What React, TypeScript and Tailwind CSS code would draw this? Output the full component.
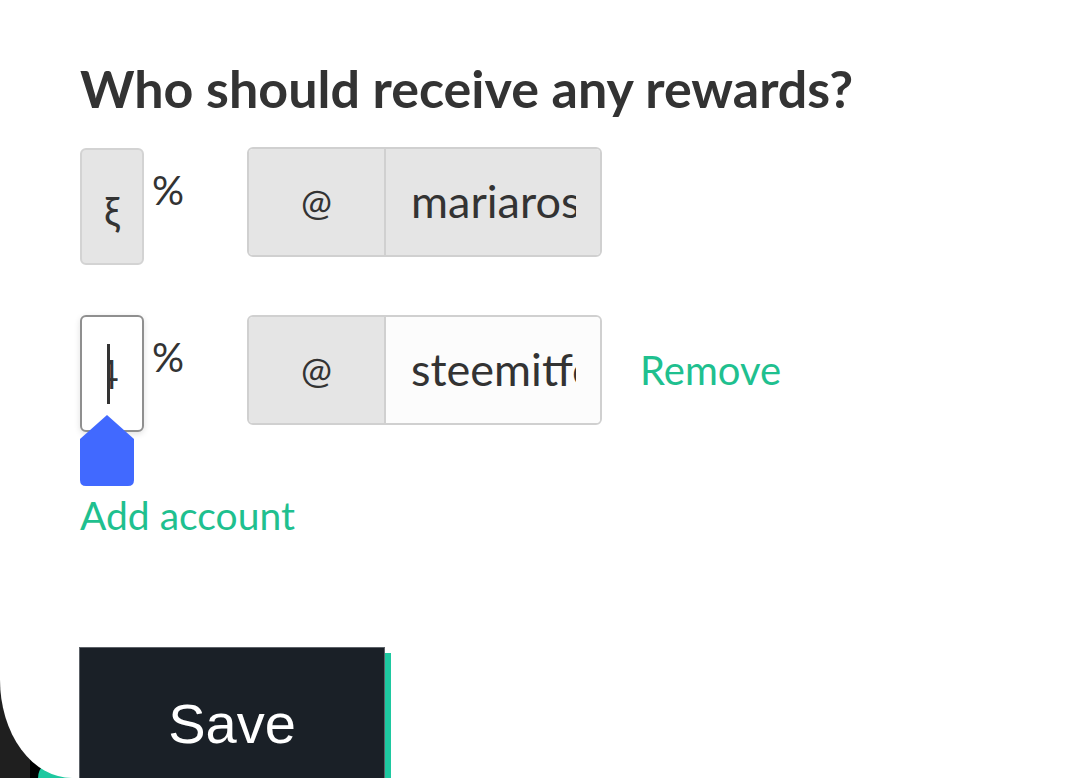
import React from 'react';

const green = 'text-[#1fc08f]';

function PercentBox({ focused, children }: { focused?: boolean; children: React.ReactNode }) {
  return (
    <div className="flex items-start">
      <div
        className={
          focused
            ? 'relative flex h-[117px] w-[64px] items-center justify-center overflow-hidden rounded-[6px] border-2 border-[#8f8f8f] bg-white shadow-[0_2px_6px_rgba(0,0,0,0.12)]'
            : 'relative flex h-[117px] w-[64px] items-center justify-center overflow-hidden rounded-[6px] border-2 border-[#d3d3d3] bg-[#e5e5e5]'
        }
      >
        {children}
      </div>
      <span className="ml-[8px] mt-[22px] text-[40px] leading-none text-[#333]">%</span>
    </div>
  );
}

function AccountInput({ value, disabled }: { value: string; disabled?: boolean }) {
  return (
    <div className="flex h-[110px] w-[355px] overflow-hidden rounded-[6px] border-2 border-[#d0d0d0]">
      <div className="flex w-[135px] items-center justify-center bg-[#e5e5e5] text-[37px] text-[#333]">@</div>
      <div
        className={
          disabled
            ? 'flex min-w-0 flex-1 items-center border-l-2 border-[#d0d0d0] bg-[#e5e5e5] pl-[25px] pr-[24px] text-[45px] text-[#333]'
            : 'flex min-w-0 flex-1 items-center border-l-2 border-[#d0d0d0] bg-[#fcfcfc] pl-[25px] pr-[24px] text-[45px] text-[#333]'
        }
      >
        <span className="block min-w-0 overflow-hidden whitespace-nowrap">{value}</span>
      </div>
    </div>
  );
}

export default function App() {
  return (
    <div className="relative h-[778px] w-[1079px] overflow-hidden bg-[#1f1f1f]" style={{ fontFamily: 'Lato, "Noto Sans", sans-serif' }}>
      {/* phone screen corner behind the sheet */}
      <div className="absolute bottom-0 left-[30px] h-[40px] w-[50px] bg-black" />
      <div className="absolute bottom-0 left-[38px] h-[18px] w-[60px] rounded-tl-[30px] bg-[#1ec8a0]" />

      <div className="relative h-full w-full rounded-bl-[72px_98px] bg-white pl-[80px] pt-[62px]">
        <h2 className="text-[52px] font-bold leading-none text-[#333]">Who should receive any rewards?</h2>

        <div className="mt-[34px] flex items-start">
          <PercentBox>
            <span className="mt-[8px] text-[40px] leading-none text-[#333]">ξ</span>
          </PercentBox>
          <div className="ml-[63px] -mt-px">
            <AccountInput value="mariaros" disabled />
          </div>
        </div>

        <div className="relative mt-[50px] flex items-start">
          <PercentBox focused>
            <div className="flex items-center">
              <div className="h-[60px] w-[3px] bg-[#333]" />
              <div className="w-[8px] overflow-hidden">
                <span className="-ml-[14px] block text-[40px] leading-none text-[#333]">4</span>
              </div>
            </div>
          </PercentBox>
          <div className="ml-[63px] flex items-center">
            <AccountInput value="steemitfo" />
            <span className={`ml-[38px] text-[40px] ${green}`}>Remove</span>
          </div>
          <svg className="absolute left-0 top-[100px]" width="54" height="71" viewBox="0 0 54 71">
            <path d="M27 0 L54 24 L54 65 Q54 71 48 71 L6 71 Q0 71 0 65 L0 24 Z" fill="#4169ff" />
          </svg>
        </div>

        <div className={`mt-[64px] text-[39px] leading-none ${green}`}>Add account</div>

        <div className="mt-[112px] w-[311px] -ml-px">
          <button
            className="flex h-[170px] w-[306px] justify-center border border-b-0 border-[#5d6268] bg-[#1a2027] pt-[34px] text-[56px] text-white shadow-[6px_6px_0_#1ec8a0]"
            style={{ fontFamily: '"Liberation Sans", Arial, sans-serif' }}
          >
            Save
          </button>
        </div>
      </div>
    </div>
  );
}
